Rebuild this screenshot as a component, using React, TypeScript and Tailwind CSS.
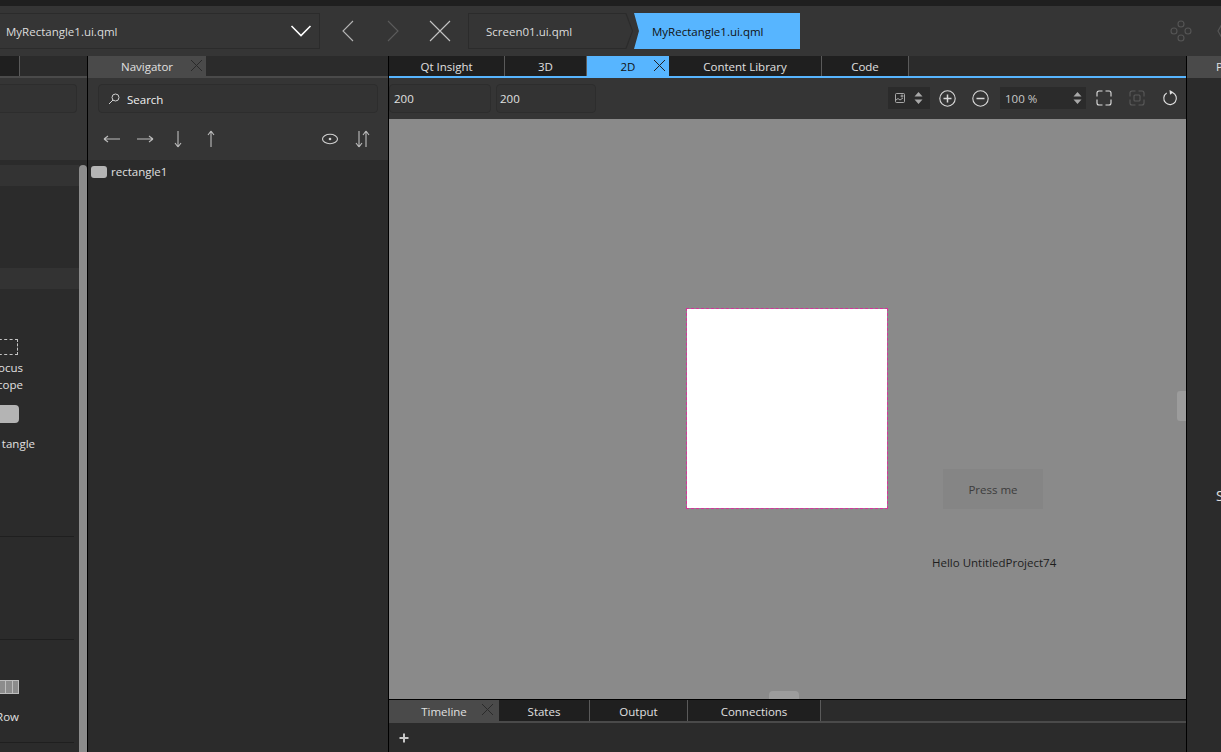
import type { ReactNode } from "react"

function Tab({ label, width, active, closable, selected, closeClass }: { label: string; width: string; active?: boolean; closable?: boolean; selected?: boolean; closeClass?: string }) {
  const bg = active ? "bg-[#57b5ff] text-[#111]" : selected ? "bg-[#4a4a4a] text-[#e0e0e0]" : "bg-[#1f1f1f] text-[#e0e0e0] border-r border-[#5a5a5a]"
  return (
    <div className={`relative flex h-full shrink-0 items-center justify-center pt-[2px] ${width} ${bg}`}>
      <span>{label}</span>
      {closable && (
        <svg className={`absolute top-[3px] ${closeClass ?? "right-[3px]"}`} width="13" height="13" viewBox="0 0 13 13" stroke={active ? "#222" : "#2a2a2a"} strokeWidth="1">
          <path d="M1 1l11 11M12 1L1 12" />
        </svg>
      )}
    </div>
  )
}

function Box({ children, className }: { children?: ReactNode; className: string }) {
  return <div className={`flex h-[29px] shrink-0 items-center rounded-[4px] border border-[#2d2d2d] bg-[#333] pt-[1px] ${className}`}>{children}</div>
}

function Arrow({ d }: { d: string }) {
  return (
    <svg width="20" height="20" viewBox="0 0 20 20" fill="none" stroke="#bdbdbd" strokeWidth="1.1">
      <path d={d} />
    </svg>
  )
}

function Stepper() {
  return (
    <svg width="9" height="12" viewBox="0 0 9 12" fill="#a8a8a8">
      <path d="M4.5 0L8.5 4.5H.5zM4.5 12L.5 7.5h8z" />
    </svg>
  )
}

function TopBar() {
  return (
    <div className="flex h-[50px] shrink-0 items-center bg-[#353535]">
      <div className="flex h-[36px] w-[320px] shrink-0 items-center justify-between border border-l-0 border-[#2b2b2b] pl-[6px] pr-[7px] text-[#dcdcdc]">
        <span className="pt-[1px]">MyRectangle1.ui.qml</span>
        <svg width="22" height="14" viewBox="0 0 22 14" fill="none" stroke="#fff" strokeWidth="1.6">
          <path d="M1.5 2l9.5 9.5L20.500 2" />
        </svg>
      </div>
      <svg className="ml-[21px]" width="14" height="22" viewBox="0 0 14 22" fill="none" stroke="#b5b5b5" strokeWidth="1.1">
        <path d="M12 1L2 11l10 10" />
      </svg>
      <svg className="ml-[31px]" width="14" height="22" viewBox="0 0 14 22" fill="none" stroke="#5c5c5c" strokeWidth="1.1">
        <path d="M2 1l10 10L2 21" />
      </svg>
      <svg className="ml-[29px]" width="22" height="22" viewBox="0 0 22 22" fill="none" stroke="#c4c4c4" strokeWidth="1.1">
        <path d="M1 1l20 20M21 1L1 21" />
      </svg>
      <div className="ml-[17px] flex h-[36px] w-[165px] shrink-0 items-center bg-[#2b2b2b] pl-[18px] text-[#dcdcdc] [clip-path:polygon(0_0,96%_0,100%_50%,96%_100%,0_100%)]">
        <div className="absolute h-[34px] w-[163px] -translate-x-[17px] bg-[#353535] [clip-path:polygon(0_0,96%_0,100%_50%,96%_100%,0_100%)]" />
        <span className="relative pt-[1px]">Screen01.ui.qml</span>
      </div>
      <div className="ml-[1px] flex h-[36px] w-[166px] shrink-0 items-center bg-[#57b5ff] pl-[18px] pt-[1px] text-[#111] [clip-path:polygon(0_0,100%_0,100%_100%,0_100%,3%_50%)]">
        MyRectangle1.ui.qml
      </div>
      <div className="flex-1" />
      <svg width="22" height="22" viewBox="0 0 22 22" fill="none" stroke="#555" strokeWidth="1.1">
        <circle cx="11" cy="4" r="3" />
        <circle cx="4" cy="11" r="3" />
        <circle cx="18" cy="11" r="3" />
        <circle cx="11" cy="18" r="3" />
      </svg>
      <div className="ml-[25px] h-[16px] w-[4px] overflow-hidden">
        <svg width="16" height="16" viewBox="0 0 16 16" fill="none" stroke="#555" strokeWidth="1.2">
          <path d="M5 1L1 8l4 7" />
        </svg>
      </div>
    </div>
  )
}

function LibraryItem({ icon, lines, className }: { icon: ReactNode; lines: string[]; className: string }) {
  return (
    <div className={`flex flex-col items-end leading-[17px] text-[#e0e0e0] ${className}`}>
      {icon}
      {lines.map((line) => (
        <span key={line} className="whitespace-nowrap">{line}</span>
      ))}
    </div>
  )
}

function LeftPanel() {
  return (
    <div className="flex w-[87px] shrink-0 flex-col overflow-hidden">
      <div className="flex h-[20px] shrink-0 bg-[#2b2b2b]">
        <div className="h-full w-[20px] border-r border-[#5a5a5a] bg-[#1f1f1f]" />
      </div>
      <div className="h-[2px] shrink-0 bg-[#4a4a4a]" />
      <div className="h-[82px] shrink-0 bg-[#353535] pt-[6px]">
        <Box className="w-[77px] rounded-l-none border-l-0" />
      </div>
      <div className="flex min-h-0 flex-1 bg-[#2b2b2b]">
        <div className="flex w-[79px] shrink-0 flex-col overflow-hidden pt-[5px]">
          <div className="h-[21px] shrink-0 bg-[#333]" />
          <div className="mt-[82px] h-[21px] shrink-0 bg-[#333]" />
          <LibraryItem
            className="mt-[50px] w-[23px]"
            lines={["ocus", "cope"]}
            icon={<div className="mb-[4px] mr-[5px] h-[16px] w-[30px] shrink-0 border border-dashed border-[#c4c4c4]" />}
          />
          <LibraryItem
            className="mt-[12px] w-[35px]"
            lines={["tangle"]}
            icon={<div className="mb-[12px] mr-[16px] h-[18px] w-[30px] shrink-0 rounded-[4px] bg-[#b4b4b4]" />}
          />
          <div className="ml-[-5px] mt-[84px] h-px w-[79px] shrink-0 bg-[#1f1f1f]" />
          <div className="ml-[-5px] mt-[102px] h-px w-[79px] shrink-0 bg-[#1f1f1f]" />
          <LibraryItem
            className="mt-[40px] w-[19px]"
            lines={["Row"]}
            icon={
              <div className="mb-[14px] flex h-[14px] w-[30px] shrink-0 justify-end border border-[#bdbdbd] bg-[#8c8c8c]">
                <div className="w-[7px] border-l border-[#bdbdbd]" />
                <div className="w-[6px] border-l border-[#bdbdbd]" />
              </div>
            }
          />
          <div className="ml-[-5px] mt-[17px] h-px w-[79px] shrink-0 bg-[#1f1f1f]" />
        </div>
        <div className="w-[8px] shrink-0 pt-[5px]">
          <div className="h-full rounded-t-[4px] bg-[#8c8c8c]" />
        </div>
      </div>
    </div>
  )
}

function Navigator() {
  return (
    <div className="flex w-[300px] shrink-0 flex-col">
      <div className="flex h-[20px] shrink-0 bg-[#2b2b2b]">
        <div className="w-[118px]">
          <Tab label="Navigator" width="w-full" selected closable />
        </div>
      </div>
      <div className="h-[2px] shrink-0 bg-[#4a4a4a]" />
      <div className="h-[82px] shrink-0 bg-[#353535] pt-[6px]">
        <Box className="ml-[10px] w-[280px] pl-[9px] pt-[2px] text-[#f0f0f0]">
          <svg className="-mt-[2px]" width="12" height="12" viewBox="0 0 12 12" fill="none" stroke="#d0d0d0" strokeWidth="1">
            <circle cx="7.500" cy="4.500" r="3.500" />
            <path d="M5 7l-4 4" />
          </svg>
          <span className="ml-[7px]">Search</span>
        </Box>
        <div className="mt-[16px] flex items-center pl-[14px] pr-[15px]">
          <Arrow d="M2 10h16M2 10l4-3M2 10l4 3" />
          <span className="ml-[13px]"><Arrow d="M2 10h16M18 10l-4-3M18 10l-4 3" /></span>
          <span className="ml-[13px]"><Arrow d="M10 2v16M10 18l-3-4M10 18l3-4" /></span>
          <span className="ml-[13px]"><Arrow d="M10 18V2M10 2l-3 4M10 2l3 4" /></span>
          <span className="ml-auto">
            <svg width="20" height="20" viewBox="0 0 20 20" fill="none" stroke="#d0d0d0" strokeWidth="1.100">
              <ellipse cx="10" cy="10" rx="7.500" ry="4.700" />
              <circle cx="10" cy="10" r="1.300" fill="#d0d0d0" stroke="none" />
            </svg>
          </span>
          <span className="ml-[13px]"><Arrow d="M6 2v16M6 18l-3-4M6 18l3-4M13 18V2M13 2l-3 4M13 2l3 4" /></span>
        </div>
      </div>
      <div className="flex-1 bg-[#2b2b2b]">
        <div className="flex h-[24px] items-center pl-[3px] text-[#e0e0e0]">
          <div className="h-[12px] w-[16px] rounded-[3px] bg-[#b4b4b4]" />
          <span className="ml-[4px]">rectangle1</span>
        </div>
      </div>
    </div>
  )
}

const cornerFrame = "M1 6.500V3a2 2 0 012-2h3.500M9.500 1H13a2 2 0 012 2v3.500M15 9.500V13a2 2 0 01-2 2H9.500M6.500 15H3a2 2 0 01-2-2V9.500"

function CanvasToolbar() {
  return (
    <div className="flex h-[41px] shrink-0 items-start bg-[#353535] pt-[6px] text-[#e0e0e0]">
      <Box className="w-[102px] pl-[4px]">200</Box>
      <Box className="ml-[5px] w-[100px] pl-[3px]">200</Box>
      <div className="ml-[292px] mt-[3px] flex h-[22px] w-[42px] items-center justify-center gap-[9px] bg-[#2b2b2b]">
        <svg width="10" height="10" viewBox="0 0 10 10" fill="none" stroke="#b5b5b5" strokeWidth="0.9">
          <rect x="0.500" y="0.500" width="9" height="9" rx="1" />
          <path d="M1 7l2-1.500L5 7l3-2" />
          <circle cx="7" cy="3" r="1" />
        </svg>
        <Stepper />
      </div>
      <div className="ml-[9px] mt-[5px] flex h-[18px] items-center gap-[16px]">
        <svg width="17" height="17" viewBox="0 0 17 17" fill="none" stroke="#d8d8d8" strokeWidth="1.100">
          <circle cx="8.500" cy="8.500" r="7.700" />
          <path d="M4.500 8.500h8M8.500 4.500v8" strokeWidth="1.500" />
        </svg>
        <svg width="17" height="17" viewBox="0 0 17 17" fill="none" stroke="#d8d8d8" strokeWidth="1.100">
          <circle cx="8.500" cy="8.500" r="7.700" />
          <path d="M4.500 8.500h8" strokeWidth="1.500" />
        </svg>
      </div>
      <div className="ml-[11px] mt-[3px] flex h-[22px] w-[86px] items-center justify-between bg-[#2b2b2b] pl-[5px] pr-[4px] text-[#c8c8c8]">
        <span className="pt-[1px]">100 %</span>
        <Stepper />
      </div>
      <div className="ml-[10px] mt-[5px] flex h-[17px] items-center gap-[17px]">
        <svg width="16" height="16" viewBox="0 0 16 16" fill="none" stroke="#e0e0e0" strokeWidth="1.100">
          <path d={cornerFrame} />
        </svg>
        <svg width="16" height="16" viewBox="0 0 16 16" fill="none" stroke="#5a5a5a" strokeWidth="1.100">
          <path d={cornerFrame} />
          <rect x="5" y="5" width="6" height="6" rx="1" />
        </svg>
        <svg width="16" height="17" viewBox="0 0 16 17" fill="none" stroke="#e0e0e0" strokeWidth="1.100">
          <path d="M10.500 3.500a6.300 6.300 0 11-5.800.500" />
          <path d="M7.500 1l4 2.300-3.500 2.500z" fill="#e0e0e0" stroke="none" />
        </svg>
      </div>
    </div>
  )
}

function Canvas() {
  return (
    <div className="relative min-h-0 flex-1 bg-[#8a8a8a]">
      <div className="absolute left-[297px] top-[189px] h-[201px] w-[202px] border border-dashed border-[#d8309c] bg-white bg-clip-padding" />
      <div className="absolute left-[554px] top-[350px] flex h-[40px] w-[100px] items-center justify-center bg-[#858585] pt-[1px] text-[#3c3c3c]">Press me</div>
      <div className="absolute left-[543px] top-[435px] whitespace-nowrap text-[#1e1e1e]">Hello UntitledProject74</div>
      <div className="absolute bottom-[0px] left-[380px] h-[8px] w-[30px] rounded-t-[4px] bg-[#9c9c9c]" />
      <div className="absolute right-0 top-[272px] h-[30px] w-[9px] rounded-l-[3px] bg-[#9c9c9c]" />
    </div>
  )
}

function Center() {
  return (
    <div className="flex w-[799px] shrink-0 flex-col border-x border-black">
      <div className="flex h-[20px] shrink-0 bg-[#2b2b2b]">
        <Tab label="Qt Insight" width="w-[116px]" />
        <Tab label="3D" width="w-[82px]" />
        <Tab label="2D" width="w-[82px]" active closable />
        <Tab label="Content Library" width="w-[153px]" />
        <Tab label="Code" width="w-[87px]" />
      </div>
      <div className="h-[2px] shrink-0 bg-[#57b5ff]" />
      <CanvasToolbar />
      <Canvas />
      <div className="h-px shrink-0 bg-black" />
      <div className="flex h-[21px] shrink-0 bg-[#2b2b2b]">
        <div className="w-[110px]"><Tab label="Timeline" width="w-full" selected closable closeClass="right-[5px]" /></div>
        <Tab label="States" width="w-[91px]" />
        <Tab label="Output" width="w-[98px]" />
        <Tab label="Connections" width="w-[133px]" />
      </div>
      <div className="h-[2px] shrink-0 bg-[#4a4a4a]" />
      <div className="flex h-[29px] shrink-0 items-center bg-[#2b2b2b] pl-[10px]">
        <svg width="10" height="10" viewBox="0 0 10 10" stroke="#c8c8c8" strokeWidth="2">
          <path d="M0.500 5h9M5 0.500v9" />
        </svg>
      </div>
    </div>
  )
}

function RightPanel() {
  return (
    <div className="flex min-w-0 flex-1 flex-col overflow-hidden">
      <div className="flex h-[22px] shrink-0 items-center bg-[#4a4a4a] pl-[29px] text-[#e0e0e0]">P</div>
      <div className="flex-1 bg-[#2b2b2b] pl-[29px] pt-[407px] text-[14px] text-[#e0e0e0]">S</div>
    </div>
  )
}

export default function App() {
  return (
    <div className="flex h-[752px] w-[1221px] flex-col overflow-hidden bg-[#1f1f1f] font-['Open_Sans','Noto_Sans',sans-serif] text-[11.5px]">
      <div className="h-[6px] shrink-0 bg-[#1f1f1f]" />
      <TopBar />
      <div className="flex min-h-0 flex-1">
        <LeftPanel />
        <div className="w-px shrink-0 bg-black" />
        <Navigator />
        <Center />
        <RightPanel />
      </div>
    </div>
  )
}
